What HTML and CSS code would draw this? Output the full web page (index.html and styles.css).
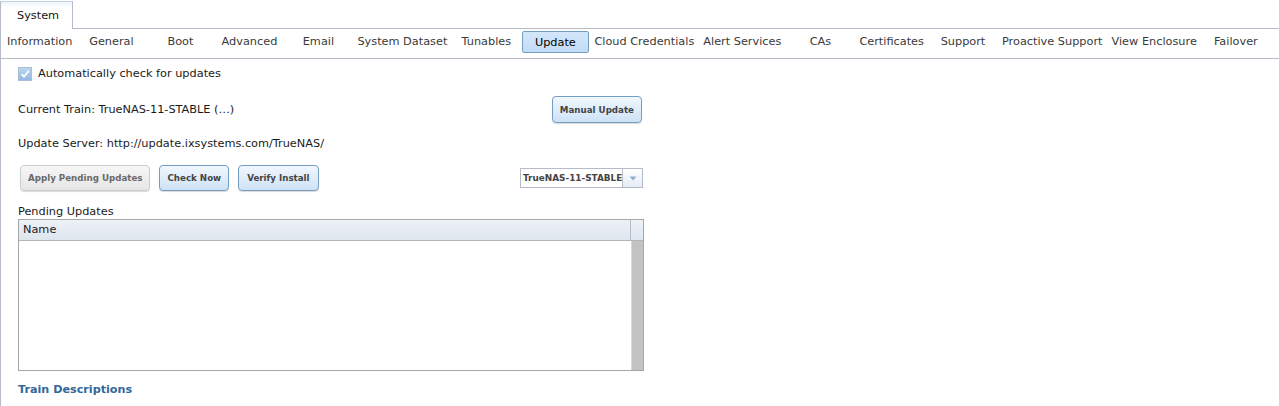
FILE: index.html
```html
<!DOCTYPE html>
<html>
<head>
<meta charset="utf-8">
<link rel="stylesheet" href="styles.css">
</head>
<body>
<div class="tabbar">
  <div class="maintab">System</div>
  <div class="tabfill"></div>
</div>
<div class="pane">
  <div class="subtabs">
    <div class="st">Information</div>
    <div class="st">General</div>
    <div class="st">Boot</div>
    <div class="st">Advanced</div>
    <div class="st">Email</div>
    <div class="st">System Dataset</div>
    <div class="st">Tunables</div>
    <div class="st sel">Update</div>
    <div class="st">Cloud Credentials</div>
    <div class="st">Alert Services</div>
    <div class="st">CAs</div>
    <div class="st">Certificates</div>
    <div class="st">Support</div>
    <div class="st">Proactive Support</div>
    <div class="st">View Enclosure</div>
    <div class="st">Failover</div>
  </div>
  <div class="content">
    <div class="row-check">
      <span class="checkbox"><svg width="12" height="12" viewBox="0 0 12 12"><path d="M2.5 6.2 L5 8.7 L9.8 2.8" fill="none" stroke="#ffffff" stroke-width="1.8"/></svg></span>
      <span>Automatically check for updates</span>
    </div>
    <div class="row-train">
      <span>Current Train: TrueNAS-11-STABLE (…)</span>
      <button class="btn manual">Manual Update</button>
    </div>
    <div class="row-server">Update Server: http://update.ixsystems.com/TrueNAS/</div>
    <div class="row-buttons">
      <button class="btn disabled">Apply Pending Updates</button>
      <button class="btn">Check Now</button>
      <button class="btn wide">Verify Install</button>
      <div class="select">
        <span class="select-text">TrueNAS-11-STABLE</span>
        <span class="select-arrow"><svg width="8" height="5" viewBox="0 0 8 5"><path d="M0.5 0.5 L7.5 0.5 L4 4.5 Z" fill="#8fb0d2"/></svg></span>
      </div>
    </div>
    <div class="label">Pending Updates</div>
    <div class="grid">
      <div class="grid-head">
        <div class="grid-col">Name</div>
        <div class="grid-corner"></div>
      </div>
      <div class="grid-body">
        <div class="grid-rows"></div>
        <div class="grid-scroll"></div>
      </div>
    </div>
    <div class="train-desc">Train Descriptions</div>
  </div>
</div>
</body>
</html>
```

FILE: styles.css
```css
html, body {
  margin: 0;
  padding: 0;
  background: #ffffff;
}
body {
  font-family: "DejaVu Sans", Verdana, sans-serif;
  font-size: 11.3px;
  color: #1a1a1a;
  width: 1279px;
  height: 406px;
  overflow: hidden;
}
.tabbar {
  display: flex;
  height: 29px;
  padding-top: 1px;
  box-sizing: border-box;
}
.maintab {
  width: 73px;
  box-sizing: border-box;
  border: 1px solid #b5bcc7;
  border-bottom: none;
  border-top-color: #c3d3e5;
  background: linear-gradient(#eef4fb 0, #ffffff 6px, #ffffff 100%);
  padding: 7px 0 0 16px;
  color: #131313;
}
.tabfill {
  flex: 1;
  border-bottom: 1px solid #b5bcc7;
}
.pane {
  border-left: 1px solid #b5bcc7;
  height: 377px;
}
.subtabs {
  display: flex;
  align-items: flex-start;
  height: 29px;
  box-sizing: content-box;
  padding-left: 6px;
  border-bottom: 1px solid #b5bcc7;
  color: #3a3a3a;
}
.st {
  min-width: 60px;
  text-align: center;
  margin-right: 9px;
  margin-top: 6px;
  white-space: nowrap;
}
.st.sel {
  min-width: 67px;
  box-sizing: border-box;
  margin-left: -3.5px;
  margin-right: 5.5px;
  margin-top: 2px;
  height: 22px;
  line-height: 21px;
  border: 1px solid #759dc0;
  border-radius: 2px;
  background: linear-gradient(#d4e7fa, #c2dcf6);
  color: #000;
}
.content {
  padding-left: 17px;
  width: 625px;
}
.row-check {
  display: flex;
  align-items: center;
  margin-top: 7px;
  height: 15px;
  gap: 6px;
}
.checkbox {
  width: 14px;
  height: 14px;
  box-sizing: border-box;
  border: 1px solid #a7bdd6;
  background: linear-gradient(#bcd5ef, #93b8e0);
  display: flex;
  align-items: center;
  justify-content: center;
}
.row-train {
  display: flex;
  align-items: center;
  justify-content: space-between;
  margin-top: 15px;
  height: 27px;
  padding-right: 1px;
}
.row-server {
  margin-top: 13px;
  height: 16px;
  line-height: 16px;
}
.btn {
  font-family: "DejaVu Sans", Verdana, sans-serif;
  font-weight: bold;
  font-size: 8.7px;
  color: #444;
  border: 1px solid #759dc0;
  border-radius: 4px;
  background: linear-gradient(#f1f7fd, #cde2f7);
  box-shadow: 0 1px 1px rgba(0,0,0,0.15);
  padding: 0 7px;
  margin: 0;
  height: 26px;
  white-space: nowrap;
  cursor: default;
}
.manual {
  height: 27px;
  padding: 0 7px;
}
.row-buttons {
  display: flex;
  align-items: center;
  margin-top: 13px;
  height: 26px;
  padding-left: 2px;
}
.row-buttons .btn {
  margin-right: 9px;
}
.row-buttons .btn.wide {
  padding: 0 8px;
}
.btn.disabled {
  border-color: #cdcdcd;
  background: linear-gradient(#f6f6f6, #e6e6e6);
  color: #6a6a6a;
}
.select {
  margin-left: auto;
  display: flex;
  width: 123px;
  height: 20px;
  box-sizing: border-box;
  border: 1px solid #b5bcc7;
  align-items: stretch;
}
.select-text {
  flex: 1;
  font-weight: bold;
  font-size: 8.9px;
  color: #444;
  line-height: 18px;
  padding-left: 2px;
  white-space: nowrap;
  overflow: hidden;
}
.select-arrow {
  width: 19px;
  border-left: 1px solid #b5bcc7;
  background: linear-gradient(#ffffff, #e4ecf4);
  display: flex;
  align-items: center;
  justify-content: center;
}
.label {
  margin-top: 14px;
  height: 14px;
  line-height: 14px;
}
.grid {
  width: 626px;
  height: 152px;
  box-sizing: border-box;
  border: 1px solid #a7a7a7;
  display: flex;
  flex-direction: column;
}
.grid-head {
  display: flex;
  height: 20px;
  border-bottom: 1px solid #b5b5b5;
  background: linear-gradient(#eef2f7, #dde5ee);
}
.grid-col {
  flex: 1;
  padding-left: 4px;
  line-height: 19px;
  border-right: 1px solid #b5bcc7;
}
.grid-corner {
  width: 12px;
}
.grid-body {
  flex: 1;
  display: flex;
}
.grid-rows {
  flex: 1;
}
.grid-scroll {
  width: 11px;
  border-left: 1px solid #d8d8d8;
  background: #c3c3c3;
}
.train-desc {
  margin-top: 11px;
  font-weight: bold;
  font-size: 11.2px;
  color: #336699;
  height: 16px;
  line-height: 16px;
}
```
